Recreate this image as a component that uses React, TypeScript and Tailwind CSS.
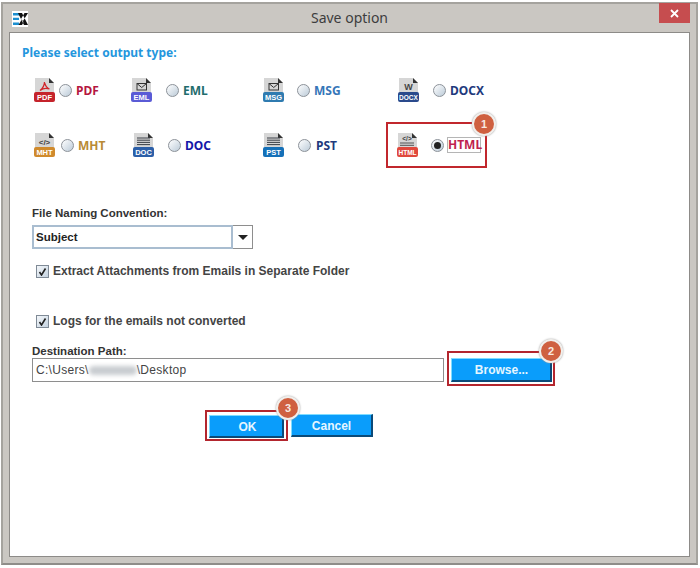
import React from "react";

const tahoma = "font-['Noto_Sans']";

function FileIcon({ label, color, glyph, labelSize = 7.5 }: { label: string; color: string; glyph: string; labelSize?: number }) {
  return (
    <svg width="22" height="26" viewBox="0 0 22 26" className="block shrink-0">
      <path d="M1 1 H15 L20 6 V24 H1 Z" fill="#d6d6d6" />
      <path d="M15 1 L20 6 H15 Z" fill="#333" />
      {glyph === "pdf" && (
        <path d="M10.5 5 C10.5 8 9 11 6 13.5 C8.5 11.5 12.5 11 15.5 12 C13 11 11 8 10.5 5 Z" fill="none" stroke="#d0252b" strokeWidth="1.3" />
      )}
      {glyph === "mail" && (
        <g fill="none" stroke="#333" strokeWidth="1">
          <rect x="6" y="6.5" width="9.5" height="6.5" />
          <path d="M6 6.5 L10.7 10.5 L15.5 6.5" />
        </g>
      )}
      {glyph === "code" && (
        <text x="10.5" y="12.5" textAnchor="middle" fontSize="8" fontWeight="700" fill="#444" fontFamily="'Liberation Sans'">{"</>"}</text>
      )}
      {glyph === "codelines" && (
        <g>
          <text x="10" y="8.5" textAnchor="middle" fontSize="6.5" fontWeight="700" fill="#444" fontFamily="'Liberation Sans'">{"</>"}</text>
          <path d="M3 11 H17 M3 13.3 H17" stroke="#444" strokeWidth="0.9" />
        </g>
      )}
      {glyph === "lines" && <path d="M4 6 H17 M4 8.2 H17 M4 10.4 H17 M4 12.6 H17" stroke="#3a3f46" strokeWidth="1" />}
      {glyph === "w" && (
        <text x="10.5" y="12.5" textAnchor="middle" fontSize="9" fontWeight="700" fill="#444" fontFamily="'Liberation Sans'">W</text>
      )}
      <rect x="0" y="15" width="21" height="10" rx="2" fill={color} />
      <text x="10.5" y="23" textAnchor="middle" fontSize={labelSize} fontWeight="700" fill="#fff" fontFamily="'Liberation Sans'">{label}</text>
    </svg>
  );
}

function Radio({ checked = false }: { checked?: boolean }) {
  return (
    <span className="flex h-[13px] w-[13px] shrink-0 items-center justify-center rounded-full border border-[#8c9299] bg-gradient-to-br from-[#ffffff] to-[#bccbd8]">
      {checked && <span className="h-[7px] w-[7px] rounded-full bg-[#222]" />}
    </span>
  );
}

function Option({ label, color, glyph, textColor, gapA, gapB = "ml-[4px]", width, labelSize }: {
  label: string; color: string; glyph: string; textColor: string; gapA: string; gapB?: string; width: string; labelSize?: number;
}) {
  return (
    <div className={`flex items-center ${width}`}>
      <FileIcon label={label} color={color} glyph={glyph} labelSize={labelSize} />
      <span className={`flex ${gapA}`}><Radio /></span>
      <span className={`${gapB} text-[12px] leading-[15px] font-bold ${tahoma} ${textColor}`}>{label}</span>
    </div>
  );
}

function Badge({ n, className }: { n: number; className: string }) {
  return (
    <span className={`absolute flex h-[24px] w-[24px] items-center justify-center rounded-full border-[2px] border-[#f1efec] bg-[#cf6040] text-[11px] font-bold text-[#f8e9e0] shadow-[0_0_2px_#999] font-['Liberation_Sans'] ${className}`}>
      {n}
    </span>
  );
}

function Check({ label, className }: { label: string; className: string }) {
  return (
    <div className={`flex items-center ${className}`}>
      <span className="flex h-[13px] w-[13px] items-center justify-center border border-[#7f8a96] bg-gradient-to-br from-[#f4f7fa] to-[#c5d3e0]">
        <svg width="9" height="9" viewBox="0 0 9 9"><path d="M1.5 5 L3.5 8 L7.5 1.5" fill="none" stroke="#222" strokeWidth="1.6" /></svg>
      </span>
      <span className="ml-[4px] text-[12px] font-bold leading-[15px] text-[#444] font-['Liberation_Sans']">{label}</span>
    </div>
  );
}

function BlueBtn({ children, className }: { children: React.ReactNode; className: string }) {
  return (
    <button className={`block border-t border-l border-t-[#7fdcff] border-l-[#7fdcff] border-r-2 border-b-2 border-r-[#0b4a78] border-b-[#0b4a78] bg-[#0a9dfb] pt-[1px] text-center text-[12px] font-bold text-[#e6f6ff] font-['Liberation_Sans'] ${className}`}>
      {children}
    </button>
  );
}

export default function App() {
  return (
    <div className="h-[568px] w-[700px] bg-white pl-[1px] pr-[2px] pt-[2px]">
      <div className="flex h-[563px] flex-col border-2 border-[#a5a39e] border-b-[#8f8d89] bg-[#cac7c2] px-[6px] pb-[6px]">
        <div className="relative flex h-[28px] shrink-0 items-center justify-center">
          <span className="absolute left-[3px] top-[7px] flex h-[16px] w-[16px] items-center justify-center bg-white">
            <svg width="15" height="12" viewBox="0 0 15 12">
              <path d="M0 0 H7 V2.5 H0 Z M0 4.7 H6 V7 H0 Z" fill="#1d8fcf" />
              <path d="M0 9.5 H6 V12 H0 Z" fill="#1d8fcf" />
              <path d="M5 0 H9 L15 12 H11 Z M15 0 H11.5 L8 6 L10 8 Z M5.5 12 H9 L10.5 9 L8.5 7 Z" fill="#111" />
            </svg>
          </span>
          <span className="mb-[2px] text-[14px] text-[#3d3d3d] font-['Noto_Sans']">Save option</span>
          <span className="absolute right-0 top-[-1px] flex h-[20px] w-[31px] items-center justify-center bg-[#c64d4f]">
            <svg width="9" height="9" viewBox="0 0 9 9"><path d="M1 1 L8 8 M8 1 L1 8" stroke="#fff" strokeWidth="1.8" /></svg>
          </span>
        </div>

        <div className="flex-1 border border-[#8d8b88] bg-white pl-[22px] pr-[10px]">
          <div className={`-ml-[10px] mt-[12px] text-[12px] font-bold leading-[16px] text-[#2496dd] ${tahoma}`}>Please select output type:</div>

          <div className="ml-[2px] mt-[16px] flex h-[26px] items-center">
            <Option label="PDF" color="#c5232b" glyph="pdf" textColor="text-[#b5173f]" gapA="ml-[3px]" width="w-[97px]" />
            <Option label="EML" color="#5a5bd6" glyph="mail" textColor="text-[#1f6d6d]" gapA="ml-[13px]" width="w-[132px]" />
            <Option label="MSG" color="#2f7bb0" glyph="mail" textColor="text-[#3676b8]" gapA="ml-[12px]" width="w-[135px]" />
            <Option label="DOCX" color="#2a4a8c" glyph="w" textColor="text-[#1f3a7d]" gapA="ml-[13px]" width="w-[110px]" labelSize={6.5} />
          </div>

          <div className="ml-[2px] mt-[29px] flex h-[26px] items-center">
            <Option label="MHT" color="#d08a2c" glyph="code" textColor="text-[#b88a35]" gapA="ml-[5px]" width="w-[99px]" />
            <Option label="DOC" color="#2c5fa8" glyph="lines" textColor="text-[#1616a8]" gapA="ml-[13px]" width="w-[130px]" />
            <Option label="PST" color="#1570b8" glyph="lines" textColor="text-[#1f3a7d]" gapA="ml-[13px]" gapB="ml-[5px]" width="w-[123px]" />
            <div className="relative -my-[10px] flex h-[46px] w-[101px] items-center border-2 border-[#c1272d] pl-[9px]">
              <FileIcon label="HTML" color="#e0483c" glyph="codelines" labelSize={6.5} />
              <span className="ml-[12px] flex"><Radio checked /></span>
              <span className={`ml-[3px] w-[34px] border border-[#b5b5b5] text-center text-[12px] font-bold leading-[14px] text-[#c01f4f] ${tahoma}`}>HTML</span>
              <Badge n={1} className="right-[-11px] top-[-12px]" />
            </div>
          </div>

          <div className="mt-[48px] text-[11.5px] font-bold leading-[15px] text-[#333] font-['Liberation_Sans']">File Naming Convention:</div>
          <div className="mt-[4px] flex h-[24px] w-[221px]">
            <div className="flex-1 border-2 border-[#a9bdd0] pl-[2px] text-[11.5px] font-bold leading-[20px] text-[#222] font-['Liberation_Sans']">Subject</div>
            <div className="flex w-[20px] items-center justify-center border border-l-0 border-[#8e8e8e]">
              <span className="h-0 w-0 border-x-[5px] border-t-[5px] border-x-transparent border-t-[#222]" />
            </div>
          </div>
          <Check label="Extract Attachments from Emails in Separate Folder" className="ml-[4px] mt-[15px]" />
          <Check label="Logs for the emails not converted" className="ml-[4px] mt-[35px]" />
          <div className="mt-[15px] text-[11.5px] font-bold leading-[15px] text-[#333] font-['Liberation_Sans']">Destination Path:</div>

          <div className="flex items-start">
            <div className="-mt-[1px] flex h-[24px] w-[412px] items-center border border-[#8e8e8e] pl-[3px] pt-[1px] text-[12px] leading-[15px] tracking-[0.3px] text-[#444] font-['Liberation_Sans']">
              C:\Users\
              <span className="h-[9px] w-[48px] rounded-full bg-[#c8ccd0] blur-[2px]" />
              \Desktop
            </div>
            <div className="relative -mt-[8px] ml-[3px] h-[35px] w-[108px] border-2 border-[#b3262e] pl-[2px] pt-[5px]">
              <BlueBtn className="h-[24px] w-[101px] pl-[1px]">Browse...</BlueBtn>
              <Badge n={2} className="right-[-10px] top-[-14px]" />
            </div>
          </div>

          <div className="ml-[173px] mt-[24px] flex items-start">
            <div className="relative h-[31px] w-[83px] border-2 border-[#b3262e] pl-[2px] pt-[3px]">
              <BlueBtn className="h-[23px] w-[75px] pl-[3px]">OK</BlueBtn>
              <Badge n={3} className="right-[-14px] top-[-16px]" />
            </div>
            <BlueBtn className="ml-[3px] mt-[4px] h-[23px] w-[82px]">Cancel</BlueBtn>
          </div>
        </div>
      </div>
    </div>
  );
}
